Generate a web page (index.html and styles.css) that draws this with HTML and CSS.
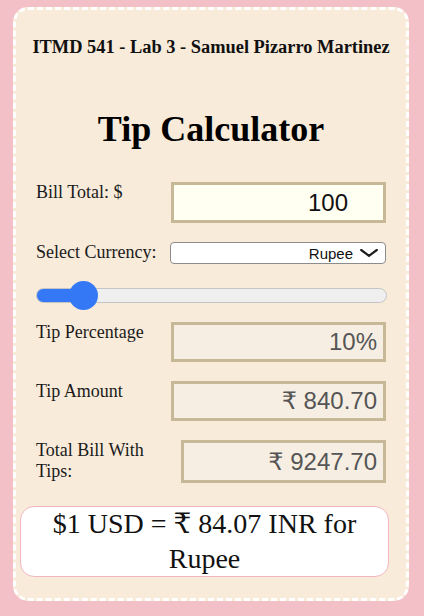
FILE: index.html
```html
<!DOCTYPE html>
<html lang="en">
<head>
<meta charset="utf-8">
<title>Tip Calculator</title>
<link rel="stylesheet" href="styles.css">
</head>
<body>
<main class="card">
  <h3 class="byline">ITMD 541 - Lab 3 - Samuel Pizarro Martinez</h3>
  <h1 class="title">Tip Calculator</h1>

  <div class="row row-bill">
    <label class="label" for="bill">Bill Total: $</label>
    <input class="field field-bill" id="bill" type="number" value="100">
  </div>

  <div class="row row-currency">
    <label class="label" for="currency">Select Currency:</label>
    <div class="select-wrap">
      <select class="select" id="currency">
        <option>Rupee</option>
      </select>
      <svg class="chevron" width="18" height="8" viewBox="0 0 18 8" aria-hidden="true">
        <polyline points="1.2,1 9,6.8 16.8,1" fill="none" stroke="#1e1e1e" stroke-width="2.2" stroke-linecap="round" stroke-linejoin="round"/>
      </svg>
    </div>
  </div>

  <input class="range" type="range" min="0" max="100" value="10" style="--val:0.1">

  <div class="row row-out">
    <label class="label">Tip Percentage</label>
    <input class="field field-out" type="text" readonly value="10%">
  </div>

  <div class="row row-out">
    <label class="label">Tip Amount</label>
    <input class="field field-out" type="text" readonly value="₹ 840.70">
  </div>

  <div class="row row-total">
    <label class="label label-narrow">Total Bill With Tips:</label>
    <input class="field field-out field-total" type="text" readonly value="₹ 9247.70">
  </div>

  <div class="rate">$1 USD = ₹ 84.07 INR for Rupee</div>
</main>
</body>
</html>
```

FILE: styles.css
```css
html, body {
  margin: 0;
  padding: 0;
}

body {
  background: #f4c0c8;
  padding: 7px 15px 15px 13px;
  font-family: "Liberation Serif", "Times New Roman", serif;
  color: #111;
}

.card {
  box-sizing: border-box;
  width: 396px;
  background: #f8ebda;
  border: 3px dashed #ffffff;
  border-radius: 15px;
  padding: 26px 20px 21px 20px;
  display: flex;
  flex-direction: column;
}

.byline {
  margin: 0 -16px;
  font-size: 18.4px;
  line-height: 22px;
  font-weight: bold;
  text-align: center;
  white-space: nowrap;
  color: #111;
}

.title {
  margin: 50px 0 0 0;
  font-size: 36px;
  line-height: 42px;
  font-weight: bold;
  text-align: center;
  color: #000;
}

.row {
  display: flex;
  justify-content: space-between;
  align-items: flex-start;
}

.row-bill {
  margin-top: 32px;
}

.row-currency {
  margin-top: 19px;
}

.row-out,
.row-total {
  margin-top: 19px;
}

.label {
  font-size: 18px;
  line-height: 21px;
  color: #1a1a1a;
}

.label-narrow {
  width: 130px;
}

.field {
  box-sizing: border-box;
  width: 215px;
  height: 41px;
  margin: 0;
  border: 3px solid #c7b898;
  border-radius: 0;
  font-family: "Liberation Sans", Arial, "DejaVu Sans", sans-serif;
  font-size: 24px;
  text-align: right;
  outline: none;
}

.field-bill {
  background: #fffff2;
  color: #111;
  padding: 0 35px 0 6px;
  -moz-appearance: textfield;
  appearance: textfield;
}

.field-bill::-webkit-inner-spin-button,
.field-bill::-webkit-outer-spin-button {
  -webkit-appearance: none;
  margin: 0;
}

.field-out {
  height: 40px;
  background: #f6eee2;
  color: #555;
  padding: 0 6px;
}

.field-total {
  width: 205px;
  height: 43px;
}

.select-wrap {
  position: relative;
  width: 216px;
  height: 22px;
}

.select {
  -webkit-appearance: none;
  appearance: none;
  box-sizing: border-box;
  width: 216px;
  height: 22px;
  margin: 0;
  padding: 0 32px 0 6px;
  background: #ffffff;
  border: 1px solid #8c8c8c;
  border-radius: 4px;
  font-family: "Liberation Sans", Arial, sans-serif;
  font-size: 15px;
  color: #111;
  text-align: right;
  text-align-last: right;
  outline: none;
}

.chevron {
  position: absolute;
  left: 190px;
  top: 7px;
  pointer-events: none;
}

.range {
  -webkit-appearance: none;
  appearance: none;
  width: 351px;
  height: 30px;
  margin: 16px 0 0 0;
  padding: 0;
  background: transparent;
}

.range::-webkit-slider-runnable-track {
  box-sizing: border-box;
  height: 15px;
  border-radius: 8px;
  border: 1px solid #c4c4c4;
  background: linear-gradient(to right,
    #3478f6 0,
    #3478f6 calc(14.5px + (100% - 29px) * var(--val)),
    #efefef calc(14.5px + (100% - 29px) * var(--val)),
    #efefef 100%);
}

.range::-webkit-slider-thumb {
  -webkit-appearance: none;
  appearance: none;
  width: 29px;
  height: 29px;
  margin-top: -8px;
  border: none;
  border-radius: 50%;
  background: #3478f6;
}

.range + .row-out {
  margin-top: 12px;
}

.rate {
  box-sizing: border-box;
  margin: 23px -3px 0 -16px;
  padding: 0 14px;
  background: #ffffff;
  border: 1px solid #f2b6c1;
  border-radius: 14px;
  font-family: "Liberation Serif", "DejaVu Serif", serif;
  font-size: 28px;
  line-height: 34.5px;
  text-align: center;
  color: #111;
}
```
